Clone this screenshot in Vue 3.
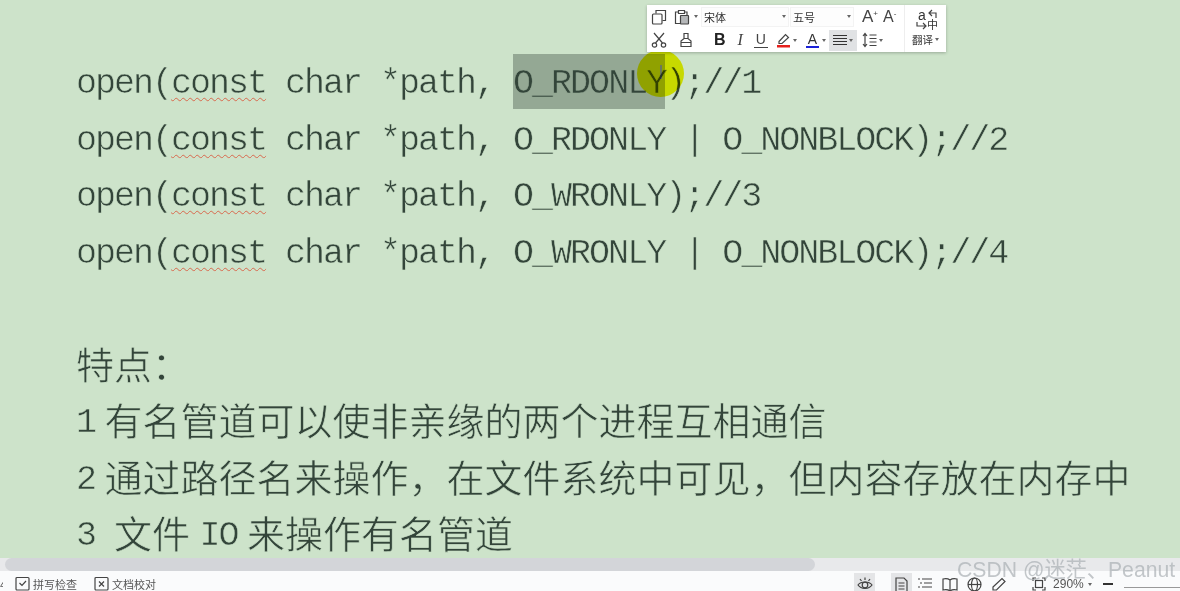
<script setup>
const codeLines = [
  { flag: 'O_RDONLY', rest: ' | O_NONBLOCK);//2' },
  { flag: 'O_WRONLY', rest: ');//3' },
  { flag: 'O_WRONLY', rest: ' | O_NONBLOCK);//4' }
]
</script>

<template>
  <div class="app">
    <main class="doc">
      <p class="line">open(<span class="typo">const</span> char *path, <span class="sel">O_RDONLY</span>);//1</p>
      <p v-for="l in codeLines" :key="l.rest + l.flag" class="line">open(<span class="typo">const</span> char *path, {{ l.flag }}{{ l.rest }}</p>
      <p class="line blank">&nbsp;</p>
      <p class="line"><span class="zh">特点：</span></p>
      <p class="line">1<span class="gap"></span><span class="zh">有名管道可以使非亲缘的两个进程互相通信</span></p>
      <p class="line">2<span class="gap"></span><span class="zh">通过路径名来操作，在文件系统中可见，但内容存放在内存中</span></p>
      <p class="line">3 <span class="zh">文件</span><span class="gap"></span>IO<span class="gap"></span><span class="zh">来操作有名管道</span></p>
    </main>

    <div class="cursor"><span class="ibeam"></span></div>

    <div class="toolbar">
      <div class="tb-main">
        <div class="tb-row">
          <svg class="ic i1" width="16" height="16" viewBox="0 0 16 16"><rect x="1.500" y="5" width="9.500" height="10" rx="1"/><path d="M5 4.500V1.500h9.500V11.500H11.500"/></svg>
          <svg class="ic i2" width="17" height="16" viewBox="0 0 17 16"><path d="M5 3H1.500v11.500H6"/><path d="M4.500 1.500h6v3h-6z"/><path d="M10.500 3H13v3"/><rect x="6.500" y="6.500" width="8" height="8.500" rx=".5" fill="#b5b7b9"/></svg>
          <span class="arr a1"></span>
          <span class="box font">宋体<span class="arr"></span></span>
          <span class="box size">五号<span class="arr"></span></span>
          <span class="aa big">A<sup>+</sup></span>
          <span class="aa small">A<sup>-</sup></span>
        </div>
        <div class="tb-row">
          <svg class="ic i3" width="16" height="16" viewBox="0 0 16 16"><path d="M3 1l8.500 10M13 1L4.500 11"/><circle cx="3.500" cy="13" r="2.200"/><circle cx="12.500" cy="13" r="2.200"/></svg>
          <svg class="ic i4" width="14" height="16" viewBox="0 0 14 16"><path d="M5 1.500h4v5H5zM2 9l3-2.500h4L12 9v5.500H2zM2 10.500h10"/></svg>
          <b class="bold">B</b>
          <i class="ital">I</i>
          <span class="und">U</span>
          <svg class="ic i5" width="15" height="16" viewBox="0 0 15 16"><path d="M3 9.500L9.500 2.500l3 3L6 11.500H3z" stroke="#444"/><rect x="1" y="13" width="13" height="2.500" fill="#e6201c" stroke="none"/></svg>
          <span class="arr a2"></span>
          <span class="colora">A</span>
          <span class="arr a3"></span>
          <span class="align">
            <svg class="ic" width="14" height="12" viewBox="0 0 14 12"><path d="M0 1.500h14M0 4.500h14M0 7.500h14M0 10.500h14" stroke="#333"/></svg>
            <span class="arr a4"></span>
          </span>
          <svg class="ic i6" width="15" height="16" viewBox="0 0 15 16"><path d="M3 2v12M1 4l2-2.500L5 4M1 12l2 2.500L5 12M7.500 3h7M7.500 6.500h7M7.500 10h7M7.500 13.500h7"/></svg>
          <span class="arr a5"></span>
        </div>
      </div>
      <div class="tb-side">
        <svg class="ic" width="24" height="23" viewBox="0 0 24 23"><path d="M22 10V5H15M18 2L15 5L18 8"/><path d="M3 14V18H12M9 15L12 18L9 21"/><text x="4" y="12" font-size="14" fill="#333" stroke="none" font-family="Liberation Sans">a</text><text x="13" y="21" font-size="11" fill="#333" stroke="none" font-family="Noto Sans CJK SC">中</text></svg>
        <span class="trans">翻译<span class="arr"></span></span>
      </div>
    </div>

    <div class="scrollbar"><div class="thumb"></div></div>

    <footer class="status">
      <div class="st-left">
        <span class="st-clip">4</span>
        <svg class="ic s1" width="15" height="15" viewBox="0 0 15 15"><rect x="1" y="1.500" width="13" height="12.500" rx="1"/><path d="M4.500 7l2.500 2.500L11 5"/></svg>
        <span class="st-text">拼写检查</span>
        <svg class="ic s2" width="15" height="15" viewBox="0 0 15 15"><rect x="1" y="1.500" width="13" height="12.500" rx="1"/><path d="M5 5.500l5 5M10 5.500l-5 5"/></svg>
        <span class="st-text">文档校对</span>
      </div>
      <div class="st-right">
        <span class="st-btn eye">
          <svg class="ic" width="16" height="15" viewBox="0 0 16 15"><path d="M1 9C4 5 12 5 15 9C12 13.500 4 13.500 1 9z"/><circle cx="8" cy="9" r="2.800"/><path d="M3 3l1.500 2M8 1.500v2.500M13 3l-1.500 2"/></svg>
        </span>
        <span class="st-btn page">
          <svg class="ic" width="13" height="15" viewBox="0 0 13 15"><path d="M1 1h8l3 3v11H1z"/><path d="M3.500 6h6M3.500 9h6M3.500 12h6"/></svg>
        </span>
        <svg class="ic v1" width="14" height="14" viewBox="0 0 14 14"><path d="M0 2h2M4 2h10M2 6h2M6 6h8M0 10h2M4 10h10"/></svg>
        <svg class="ic v2" width="16" height="15" viewBox="0 0 16 15"><path d="M8 3C6 1.500 3 1.500 1 2v11c2-.5 5-.5 7 1c2-1.500 5-1.500 7-1V2c-2-.5-5-.5-7 1zM8 3v11"/></svg>
        <svg class="ic v3" width="15" height="15" viewBox="0 0 15 15"><circle cx="7.500" cy="7.500" r="6.500"/><ellipse cx="7.500" cy="7.500" rx="3" ry="6.500"/><path d="M1 7.500h13"/></svg>
        <svg class="ic v4" width="16" height="15" viewBox="0 0 16 15"><path d="M2 10L11 1.500l3 3L5.500 13H2zM0 14.500h9"/></svg>
        <svg class="ic v5" width="14" height="14" viewBox="0 0 14 14"><path d="M1 4V1h3M10 1h3v3M1 10v3h3M13 10v3h-3"/><rect x="3.500" y="3.500" width="7" height="7"/></svg>
        <span class="zoom">290%</span>
        <span class="arr a6"></span>
        <span class="minus"></span>
        <span class="slider"></span>
      </div>
    </footer>

    <div class="mark">CSDN @迷茫、Peanut</div>
  </div>
</template>

<style>
html, body { margin: 0; overflow: hidden; }
</style>

<style scoped>
.app {
  position: relative;
  width: 1180px;
  height: 591px;
  display: flex;
  flex-direction: column;
  overflow: hidden;
  background: #cde3ca;
  font-family: "Noto Sans CJK SC", "Liberation Sans", sans-serif;
  filter: blur(0.35px);
}
.doc {
  flex: 1;
  min-height: 0;
  overflow: hidden;
  padding: 54px 0 0 76px;
  box-sizing: border-box;
}
.line {
  margin: 0;
  height: 56.500px;
  line-height: 60.500px;
  white-space: pre;
  font-family: "Liberation Mono", "Noto Sans CJK SC", monospace;
  font-size: 35px;
  letter-spacing: -2px;
  color: #33453a;
  -webkit-text-stroke: 0.5px #cde3ca;
}
.zh {
  font-family: "Noto Sans CJK SC", sans-serif;
  font-size: 38px;
  line-height: 1;
  letter-spacing: 0;
  vertical-align: -3px;
  -webkit-text-stroke: 0.6px #cde3ca;
}
.typo {
  text-decoration: underline wavy #d8694e 1px;
  text-underline-offset: 4px;
}
.sel {
  display: inline-block;
  height: 55px;
  background: #94a894;
  vertical-align: top;
  -webkit-text-stroke-color: #94a894;
}
.gap {
  display: inline-block;
  width: 9.500px;
}
.cursor {
  position: absolute;
  left: 637px;
  top: 50px;
  width: 47px;
  height: 47px;
  border-radius: 50%;
  background: #f8f400;
  mix-blend-mode: multiply;
}
.ibeam {
  position: absolute;
  left: 23px;
  top: 15px;
  width: 2px;
  height: 14px;
  background: #b9b7a0;
}
.toolbar {
  position: absolute;
  left: 647px;
  top: 5px;
  width: 299px;
  height: 47px;
  display: flex;
  background: #fff;
  box-shadow: 0 1px 3px rgba(0, 0, 0, 0.25);
  color: #333;
}
.ic {
  display: block;
  flex: none;
  fill: none;
  stroke: #444;
  stroke-width: 1.200;
}
.tb-main {
  width: 257px;
  display: flex;
  flex-direction: column;
}
.tb-row {
  height: 23.500px;
  display: flex;
  align-items: center;
}
.arr {
  display: inline-block;
  flex: none;
  width: 0;
  height: 0;
  border-left: 2.500px solid transparent;
  border-right: 2.500px solid transparent;
  border-top: 3px solid #666;
}
.i1 { margin-left: 4px; }
.i2 { margin-left: 7px; }
.a1 { margin-left: 3px; }
.box {
  height: 20px;
  display: flex;
  align-items: center;
  justify-content: space-between;
  box-sizing: border-box;
  padding: 0 2px;
  font-size: 11px;
  background: #fdfdfd;
  border: 1px solid #f3f3f3;
}
.font { width: 88px; margin-left: 3px; }
.size { width: 64px; margin-left: 1px; }
.aa {
  font-family: "Liberation Sans", sans-serif;
  line-height: 1;
  color: #444;
}
.aa sup { font-size: 8px; vertical-align: 6px; line-height: 0; }
.big { font-size: 17px; margin-left: 8px; }
.small { font-size: 16px; margin-left: 5px; }
.i3 { margin-left: 4px; }
.i4 { margin-left: 12px; }
.bold {
  margin-left: 21px;
  font: 700 16px "Liberation Sans", sans-serif;
  color: #222;
}
.ital {
  margin-left: 12px;
  font: italic 400 16px "Liberation Serif", serif;
  color: #444;
}
.und {
  margin-left: 11px;
  width: 14px;
  text-align: center;
  font: 400 14px/15px "Liberation Sans", sans-serif;
  border-bottom: 1px solid #444;
  color: #444;
}
.i5 { margin-left: 8px; }
.a2 { margin-left: 2px; }
.colora {
  margin-left: 9px;
  width: 13px;
  text-align: center;
  font: 400 14px/14px "Liberation Sans", sans-serif;
  border-bottom: 2px solid #1c22d8;
  color: #333;
}
.a3 { margin-left: 3px; }
.align {
  margin-left: 3px;
  width: 28px;
  height: 21px;
  display: flex;
  align-items: center;
  justify-content: center;
  gap: 2px;
  background: #e0e2e4;
}
.i6 { margin-left: 5px; }
.a5 { margin-left: 2px; }
.tb-side {
  flex: 1;
  display: flex;
  flex-direction: column;
  align-items: center;
  gap: 2px;
  padding-top: 3px;
  border-left: 1px solid #eee;
}
.trans {
  display: flex;
  align-items: center;
  gap: 2px;
  font-size: 10.500px;
  line-height: 13px;
}
.scrollbar {
  height: 13px;
  flex: none;
  background: #e8e9eb;
  padding-left: 5px;
}
.thumb {
  width: 810px;
  height: 13px;
  border-radius: 7px;
  background: #d3d5d9;
}
.status {
  height: 20px;
  flex: none;
  display: flex;
  justify-content: space-between;
  background: #fafbfc;
  color: #555;
  font-size: 11px;
  overflow: hidden;
}
.st-left, .st-right {
  display: flex;
  align-items: center;
  height: 20px;
}
.st-left { padding-top: 5px; box-sizing: border-box; }
.st-clip { width: 3px; overflow: hidden; }
.s1 { margin-left: 12px; }
.s2 { margin-left: 17px; }
.st-text { margin-left: 3px; white-space: nowrap; }
.st-right { width: 326px; }
.st-btn {
  height: 18px;
  width: 22px;
  margin-top: 2px;
  display: flex;
  align-items: flex-end;
  justify-content: center;
  background: #e4e5e7;
}
.page { margin-left: 16px; }
.page svg { margin-bottom: -1px; }
.v1 { margin: 6px 0 0 6px; }
.v2 { margin: 6px 0 0 10px; }
.v3 { margin: 6px 0 0 9px; }
.v4 { margin: 6px 0 0 9px; }
.v5 { margin: 6px 0 0 25px; }
.zoom {
  margin: 6px 0 0 7px;
  width: 30px;
  font: 400 12px "Liberation Sans", sans-serif;
}
.a6 { margin: 6px 0 0 5px; }
.minus {
  margin: 6px 0 0 11px;
  width: 10px;
  height: 2px;
  background: #333;
}
.slider {
  margin: 12px 0 0 11px;
  width: 59px;
  height: 1px;
  background: #999;
}
.mark {
  position: absolute;
  left: 957px;
  top: 556px;
  white-space: nowrap;
  font: 400 21.200px/28px "Liberation Sans", "Noto Sans CJK SC", sans-serif;
  color: rgba(170, 175, 180, 0.7);
}
</style>
